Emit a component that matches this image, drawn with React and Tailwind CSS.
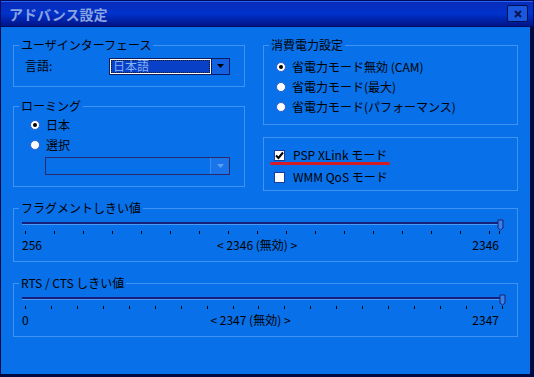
const font = {
    fontFamily: '"Noto Sans CJK JP", "Liberation Sans", sans-serif',
};

function Group({ label, className = "", children }) {
    return (
        <div
            className={
                "relative border border-[#3f93f4] " + className
            }
        >
            {label && (
                <span
                    className="
                        absolute
                        -top-[7px]
                        left-[5px]
                        px-[2px]
                        bg-[#0870e8]
                        text-[12px]
                        leading-[12px]
                        text-black
                    "
                >
                    {label}
                </span>
            )}
            {children}
        </div>
    );
}

function Radio({ checked, children }) {
    return (
        <div className="flex items-center h-[20px] gap-[6px]">
            <span
                className="
                    w-[10px]
                    h-[10px]
                    rounded-full
                    bg-white
                    border
                    border-[#2c5fd0]
                    flex
                    items-center
                    justify-center
                "
            >
                {checked && (
                    <span className="w-[4px] h-[4px] rounded-full bg-black" />
                )}
            </span>
            <span className="text-[12px] leading-none text-black">
                {children}
            </span>
        </div>
    );
}

function Check({ checked, children }) {
    return (
        <div className="flex items-center h-[22px] gap-[8px]">
            <span
                className="
                    w-[11px]
                    h-[11px]
                    bg-white
                    border
                    border-[#1c3a9a]
                    flex
                    items-center
                    justify-center
                "
            >
                {checked && (
                    <svg width="9" height="9" viewBox="0 0 9 9">
                        <path
                            d="M1 4.5 L3.5 7 L8 1.5"
                            fill="none"
                            stroke="#000"
                            strokeWidth="2"
                        />
                    </svg>
                )}
            </span>
            <span className="text-[12px] leading-none text-black">
                {children}
            </span>
        </div>
    );
}

function Slider({ ticks, thumbX, trackEnd }) {
    return (
        <svg width="503" height="20" className="block">
            <rect x="8" y="4" width={trackEnd - 8} height="2" fill="#16207a" />
            <rect x="8" y="6" width={trackEnd - 8} height="1" fill="#4a9af6" />
            {ticks.map((x, i) => (
                <rect key={i} x={x} y="13" width="1" height="3" fill="#000" />
            ))}
            <path
                d={`M${thumbX} 2 H${thumbX + 5} V10 L${thumbX + 2.5} 12 L${thumbX} 10 Z`}
                fill="#3a80ea"
                stroke="#182070"
                strokeWidth="1"
            />
        </svg>
    );
}

function SliderGroup({ label, min, value, ticks, thumbX, trackEnd }) {
    return (
        <Group label={label} className="h-[54px] pt-[9px]">
            <Slider ticks={ticks} thumbX={thumbX} trackEnd={trackEnd} />
            <div
                className="
                    flex
                    justify-between
                    items-center
                    h-[12px]
                    mt-[1px]
                    pl-[8px]
                    pr-[18px]
                    text-[12px]
                    leading-none
                    text-black
                "
            >
                <span>{min}</span>
                <span>{"< " + value + " (無効) >"}</span>
                <span>{value}</span>
            </div>
        </Group>
    );
}

export default function App() {
    const fragTicks = [];
    for (let i = 0; i < 17; i++) fragTicks.push(11 + 29 * i);
    fragTicks.push(485);

    const rtsTicks = [];
    for (let i = 0; i < 19; i++) rtsTicks.push(Math.round(11 + 25.94 * i));
    rtsTicks.push(488);

    return (
        <div
            className="w-[534px] h-[377px] bg-[#000a40] flex flex-col text-black"
            style={font}
        >
            <div
                className="
                    h-[27px]
                    flex
                    items-center
                    justify-between
                    pl-[8px]
                    pr-[5px]
                    border
                    border-[#000c5c]
                    bg-gradient-to-b
                    from-[#0a2cb8]
                    via-[#0032cc]
                    to-[#001488]
                    shadow-[inset_0_1px_0_#2a62f0]
                "
            >
                <span
                    className="
                        text-[14px]
                        font-bold
                        leading-none
                        text-[#8ca4e0]
                    "
                >
                    アドバンス設定
                </span>
                <div
                    className="
                        w-[21px]
                        h-[17px]
                        rounded-[2px]
                        bg-[#1a58e0]
                        border
                        border-[#00104a]
                        flex
                        items-center
                        justify-center
                    "
                >
                    <svg width="8" height="8" viewBox="0 0 8 8">
                        <path
                            d="M1 1 L7 7 M7 1 L1 7"
                            stroke="#0a1450"
                            strokeWidth="2"
                        />
                    </svg>
                </div>
            </div>

            <div
                className="
                    flex-1
                    ml-[1px]
                    mr-[4px]
                    mb-[3px]
                    bg-[#0870e8]
                    pl-[12px]
                    pt-[18px]
                    flex
                    flex-col
                "
            >
                <div className="flex gap-[18px] h-[146px]">
                    <div className="w-[232px] flex flex-col gap-[19px]">
                        <Group
                            label="ユーザインターフェース"
                            className="h-[42px] flex items-center pl-[11px]"
                        >
                            <span className="w-[84px] text-[12px] leading-none text-black">
                                言語:
                            </span>
                            <div className="flex h-[17px] w-[121px] border border-[#101a60]">
                                <div className="flex-1 bg-[#0840c8] border border-white">
                                    <div
                                        className="
                                            h-full
                                            border
                                            border-dotted
                                            border-[#1a1a1a]
                                            flex
                                            items-center
                                            pl-[1px]
                                            text-[12px]
                                            leading-none
                                            text-[#86b2f2]
                                        "
                                    >
                                        日本語
                                    </div>
                                </div>
                                <div
                                    className="
                                        w-[18px]
                                        bg-[#1262e2]
                                        border-l
                                        border-[#101a60]
                                        flex
                                        items-center
                                        justify-center
                                    "
                                >
                                    <svg width="7" height="4" viewBox="0 0 7 4">
                                        <path d="M0 0 H7 L3.5 4 Z" fill="#000" />
                                    </svg>
                                </div>
                            </div>
                        </Group>

                        <Group
                            label="ローミング"
                            className="h-[81px] pt-[8px] pl-[16px]"
                        >
                            <Radio checked>日本</Radio>
                            <Radio>選択</Radio>
                            <div
                                className="
                                    ml-[15px]
                                    mt-[2px]
                                    w-[185px]
                                    h-[18px]
                                    flex
                                    border
                                    border-[#2a2a6a]
                                "
                            >
                                <div className="flex-1" />
                                <div
                                    className="
                                        w-[19px]
                                        bg-[#1a74ea]
                                        border-l
                                        border-[#3a8cf2]
                                        flex
                                        items-center
                                        justify-center
                                    "
                                >
                                    <svg width="7" height="4" viewBox="0 0 7 4">
                                        <path d="M0 0 H7 L3.5 4 Z" fill="#5aa0f4" />
                                    </svg>
                                </div>
                            </div>
                        </Group>
                    </div>

                    <div className="w-[255px] flex flex-col gap-[12px]">
                        <Group
                            label="消費電力設定"
                            className="h-[80px] pt-[11px] pl-[12px]"
                        >
                            <Radio checked>省電力モード無効 (CAM)</Radio>
                            <Radio>省電力モード(最大)</Radio>
                            <Radio>省電力モード(パフォーマンス)</Radio>
                        </Group>

                        <Group className="h-[54px] pt-[6px] pl-[10px]">
                            <Check checked>PSP XLink モード</Check>
                            <Check>WMM QoS モード</Check>
                            <span
                                className="
                                    absolute
                                    left-[6px]
                                    top-[24px]
                                    w-[120px]
                                    h-[3px]
                                    rounded-full
                                    bg-[#d41c28]
                                "
                            />
                        </Group>
                    </div>
                </div>

                <div className="w-[505px] mt-[17px] flex flex-col gap-[21px]">
                    <SliderGroup
                        label="フラグメントしきい値"
                        min="256"
                        value="2346"
                        ticks={fragTicks}
                        thumbX={484}
                        trackEnd={486}
                    />
                    <SliderGroup
                        label="RTS / CTS しきい値"
                        min="0"
                        value="2347"
                        ticks={rtsTicks}
                        thumbX={486}
                        trackEnd={488}
                    />
                </div>
            </div>
        </div>
    );
}
